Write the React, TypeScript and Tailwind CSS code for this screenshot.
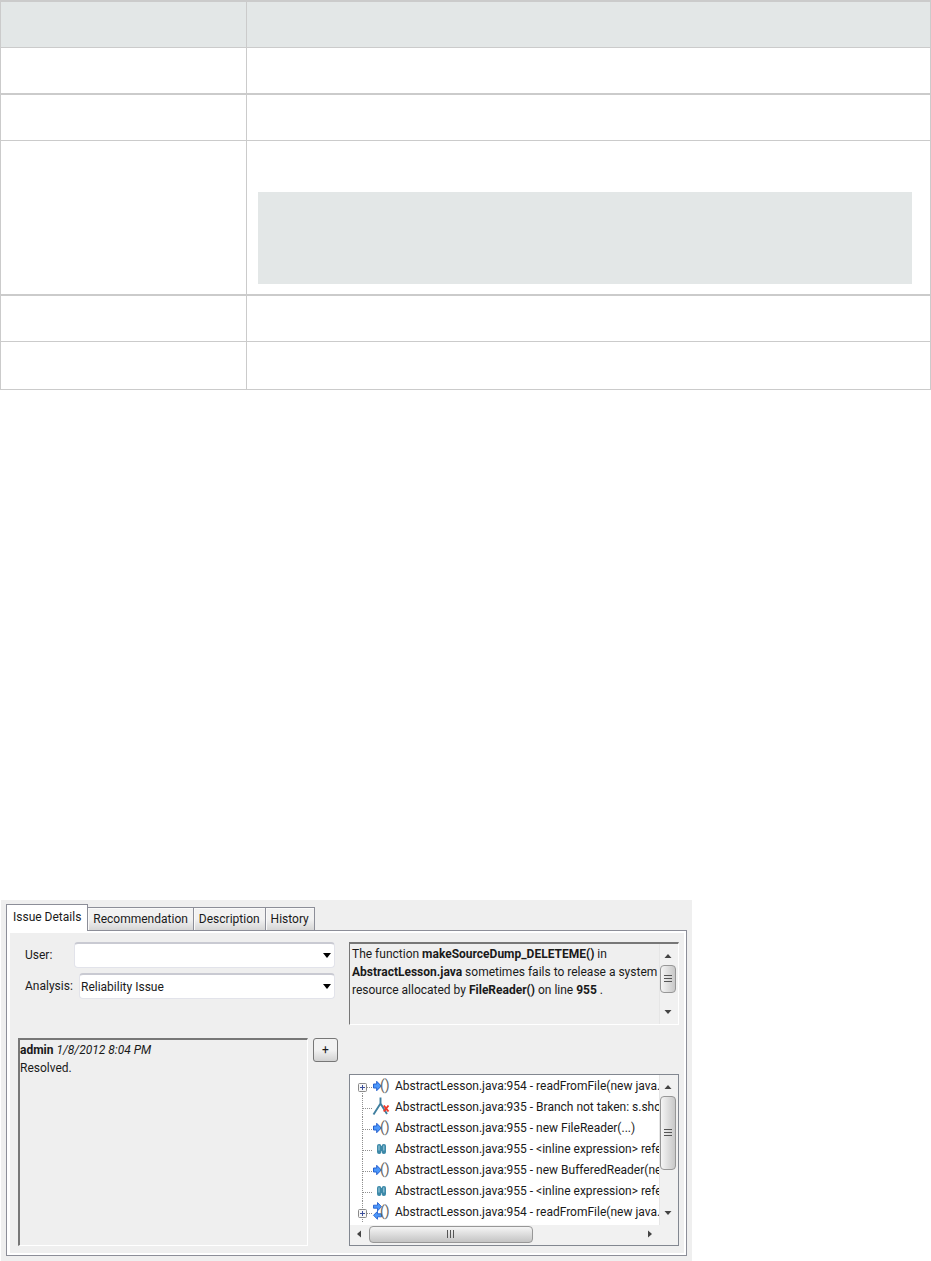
import React, { useState } from 'react';
import clsx from 'clsx';

type NodeKind = 'call' | 'branch' | 'reference' | 'passthrough';

interface TraceNode {
  kind: NodeKind;
  label: string;
  expandable?: boolean;
}

const tabs = ['Issue Details', 'Recommendation', 'Description', 'History'];

const trace: TraceNode[] = [
  { kind: 'call', label: 'AbstractLesson.java:954 - readFromFile(new java.', expandable: true },
  { kind: 'branch', label: 'AbstractLesson.java:935 - Branch not taken: s.sho' },
  { kind: 'call', label: 'AbstractLesson.java:955 - new FileReader(...)' },
  { kind: 'reference', label: 'AbstractLesson.java:955 - <inline expression> refe' },
  { kind: 'call', label: 'AbstractLesson.java:955 - new BufferedReader(ne' },
  { kind: 'reference', label: 'AbstractLesson.java:955 - <inline expression> refe' },
  { kind: 'passthrough', label: 'AbstractLesson.java:954 - readFromFile(new java.', expandable: true },
];

const Parens = () => (
  <text x="25" y="15" fontSize="14" fill="#666" fontFamily="Roboto, sans-serif">()</text>
);

const KindIcon: React.FC<{ kind: NodeKind }> = ({ kind }) => {
  if (kind === 'call') {
    return (
      <>
        <path d="M18.5 9h3.200v-2.700l4.600 4.700-4.600 4.700v-2.700h-3.200z" fill="#4b97fa" stroke="#2460cf" strokeWidth="1" />
        <Parens />
      </>
    );
  }
  if (kind === 'branch') {
    return (
      <>
        <path d="M25.500 1.500v7M25.500 7.500l-7 11M25.500 7.500l6.500 10.500" stroke="#3f7f9f" strokeWidth="1.900" fill="none" />
        <path d="M28.800 9.500l4.700 6M33.500 9.500l-4.700 6" stroke="#ee3a2a" strokeWidth="2" fill="none" />
      </>
    );
  }
  if (kind === 'reference') {
    return (
      <>
        <rect x="22" y="6" width="4.300" height="10" rx="2" fill="#3d89a8" />
        <rect x="26.700" y="6" width="4.300" height="10" rx="2" fill="#3d89a8" />
        <rect x="24" y="8" width="5" height="5" fill="#3d89a8" />
        <path d="M24 7.500v5M28.800 7.500v5" stroke="#93c6da" strokeWidth="1.200" />
      </>
    );
  }
  return (
    <>
      <g fill="#4b97fa" stroke="#2460cf" strokeWidth="0.900">
        <path d="M18.500 4.200h4v-2.700l4 4.200-4 4.200v-2.700h-4z" />
        <path d="M26.500 12.800h-4v-2.500l-4 4 4 4v-2.500h4z" />
      </g>
      <Parens />
    </>
  );
};

const TreeGutter: React.FC<{ node: TraceNode; first: boolean }> = ({ node, first }) => (
  <svg width="36" height="21" className="shrink-0" aria-hidden="true">
    <path d={first ? 'M7.5 12v9' : 'M7.5 0v21'} stroke="#909090" strokeDasharray="1 1" />
    <path d="M8 12.500h10" stroke="#909090" strokeDasharray="1 1" />
    {node.expandable && (
      <>
        <rect x="3.500" y="8.500" width="8" height="8" rx="1" fill="#f6f6f6" stroke="#8a8a8a" />
        <path d="M5 12.500h5M7.500 10v5" stroke="#3c4f9a" />
      </>
    )}
    <KindIcon kind={node.kind} />
  </svg>
);

const Arrow: React.FC<{ d: string }> = ({ d }) => (
  <svg width="8" height="8" viewBox="0 0 8 8" className="shrink-0" aria-hidden="true">
    <path d={d} fill="#444" />
  </svg>
);

const VerticalScrollbar: React.FC<{ thumb: string }> = ({ thumb }) => (
  <div className="flex w-[19px] shrink-0 flex-col items-center border-l border-[#e6e6e6] bg-[#f1f1f1] py-2 pr-[2px]">
    <Arrow d="M0.500 6L4 2l3.500 4z" />
    <div
      className={clsx(
        'mt-[5px] mb-auto flex w-4 items-center justify-center rounded-sm border border-[#979797] bg-gradient-to-r from-[#f5f5f5] to-[#c8c8c8]',
        thumb
      )}
    >
      <svg width="8" height="10" aria-hidden="true">
        <path d="M0 1.500h8M0 4.500h8M0 7.500h8" stroke="#555" />
      </svg>
    </div>
    <Arrow d="M0.500 2L4 6l3.500-4z" />
  </div>
);

const HorizontalScrollbar = () => (
  <div className="flex h-5 items-center bg-[#f1f1f1] pr-6 pb-[2px] pl-[5px]">
    <Arrow d="M6 0.500L2 4l4 3.500z" />
    <div className="mr-auto ml-[6px] flex h-[17px] w-[164px] items-center justify-center rounded-sm border border-[#979797] bg-gradient-to-b from-[#f5f5f5] to-[#c4c4c4]">
      <svg width="10" height="8" aria-hidden="true">
        <path d="M1.500 0v8M4.500 0v8M7.500 0v8" stroke="#555" />
      </svg>
    </div>
    <Arrow d="M2 0.500L6 4 2 7.500z" />
  </div>
);

interface FieldProps {
  id: string;
  label: string;
  options: string[];
}

const SelectField: React.FC<FieldProps> = ({ id, label, options }) => (
  <div className="flex items-center gap-2 pr-[3px] pl-[7px]">
    <label htmlFor={id} className={id === 'user' ? 'w-[41px]' : 'w-[46px]'}>{label}</label>
    <div className="relative min-w-0 flex-1">
      <select
        id={id}
        className="block h-[26px] w-full appearance-none rounded-sm border border-t-2 border-[#e2e3ea] border-t-[#c9cad2] bg-white pl-px"
      >
        {options.map((option) => (
          <option key={option}>{option}</option>
        ))}
      </select>
      <svg width="8" height="5" className="pointer-events-none absolute top-[11px] right-1" aria-hidden="true">
        <path d="M0 0h8L4 5z" fill="#000" />
      </svg>
    </div>
  </div>
);

const ReferenceTable = () => (
  <table className="w-full table-fixed border-separate border-spacing-0 border-l border-[#cbcbcb]">
    <colgroup>
      <col className="w-[246px]" />
      <col />
    </colgroup>
    <thead>
      <tr className="h-12 bg-[#e3e7e7]">
        <th className="border-t-2 border-r border-b border-[#cbcbcb]" />
        <th className="border-t-2 border-r border-b border-[#cbcbcb]" />
      </tr>
    </thead>
    <tbody>
      <tr className="h-[47px]">
        <td className="border-r border-b-2 border-[#cbcbcb]" />
        <td className="border-r border-b-2 border-[#cbcbcb]" />
      </tr>
      <tr className="h-[46px]">
        <td className="border-r border-b border-[#cbcbcb]" />
        <td className="border-r border-b border-[#cbcbcb]" />
      </tr>
      <tr>
        <td className="border-r border-b-2 border-[#cbcbcb]" />
        <td className="border-r border-b-2 border-[#cbcbcb] pt-[51px] pr-[18px] pb-[10px] pl-[11px]">
          <div className="h-[92px] bg-[#e3e7e7]" />
        </td>
      </tr>
      <tr className="h-[46px]">
        <td className="border-r border-b border-[#cbcbcb]" />
        <td className="border-r border-b border-[#cbcbcb]" />
      </tr>
      <tr className="h-12">
        <td className="border-r border-b border-[#cbcbcb]" />
        <td className="border-r border-b border-[#cbcbcb]" />
      </tr>
    </tbody>
  </table>
);

const IssuePanel = () => {
  const [active, setActive] = useState(tabs[0]);

  return (
    <section className="ml-px max-w-[691px] bg-[#efefef] px-[5px] pt-1 pb-[5px]">
      {/* Tabs */}
      <div role="tablist" className="flex items-end">
        {tabs.map((tab) => (
          <button
            key={tab}
            role="tab"
            aria-selected={tab === active}
            onClick={() => setActive(tab)}
            className={clsx(
              'border border-b-0 border-[#8c8e98] whitespace-nowrap',
              tab === active
                ? 'relative -mb-px h-[27px] bg-white px-[6px] pb-[2px]'
                : 'h-[23px] border-l-0 bg-gradient-to-b from-[#f2f2f2] from-50% to-[#d6d6d6] px-[5px] shadow-[inset_1px_1px_0_#fafafa]'
            )}
          >
            {tab}
          </button>
        ))}
      </div>

      <div className="flex gap-[11px] border border-[#8c8e98] bg-[#efefef] pt-[11px] pr-[7px] pb-[9px] pl-[11px] shadow-[inset_3px_2px_0_#fff,inset_-2px_-2px_0_#fff]">
        {/* Audit fields and comments */}
        <div className="flex min-w-0 flex-[32] flex-col">
          <div className="flex flex-col gap-[5px]">
            <SelectField id="user" label="User:" options={['']} />
            <SelectField id="analysis" label="Analysis:" options={['Reliability Issue']} />
          </div>
          <div className="mt-[39px] flex flex-1 items-start gap-[5px]">
            <div className="min-w-0 flex-1 self-stretch border border-t-2 border-l-2 border-white border-t-[#777] border-l-[#777] pt-px leading-[18px]">
              <p>
                <strong>admin</strong> <em>1/8/2012 8:04 PM</em>
              </p>
              <p>Resolved.</p>
            </div>
            <button
              aria-label="Add comment"
              className="h-6 w-[25px] rounded-[3px] border border-[#777] bg-gradient-to-b from-[#f2f2f2] from-50% to-[#d2d2d2] leading-none"
            >
              +
            </button>
          </div>
        </div>

        {/* Summary and analysis trace */}
        <div className="flex min-w-0 flex-[33] flex-col gap-[49px]">
          <div className="flex h-[83px] border border-t-2 border-white border-t-[#777] border-l-[#777]">
            <p className="min-w-0 flex-1 pt-[1px] pl-[2px] leading-[18px]">
              The function <strong>makeSourceDump_DELETEME()</strong> in{' '}
              <strong>AbstractLesson.java</strong> sometimes fails to release a system{' '}
              {'resource allocated by '}
              <strong>FileReader()</strong> on line <strong>955</strong> .
            </p>
            <VerticalScrollbar thumb="h-7" />
          </div>
          <div className="border border-[#828790] bg-white">
            <div className="flex">
              <ul role="tree" className="min-w-0 flex-1 overflow-hidden pb-[3px] pl-[5px]">
                {trace.map((node, index) => (
                  <li key={index} role="treeitem" className="flex h-[21px] items-center gap-1 whitespace-nowrap">
                    <TreeGutter node={node} first={index === 0} />
                    <span>{node.label}</span>
                  </li>
                ))}
              </ul>
              <VerticalScrollbar thumb="h-[74px]" />
            </div>
            <HorizontalScrollbar />
          </div>
        </div>
      </div>
    </section>
  );
};

export default function App() {
  return (
    <main className="bg-white font-['Roboto',sans-serif] text-[12px] leading-[18px] text-[#1a1a1a]">
      <ReferenceTable />
      <div className="mt-[510px]">
        <IssuePanel />
      </div>
    </main>
  );
}
